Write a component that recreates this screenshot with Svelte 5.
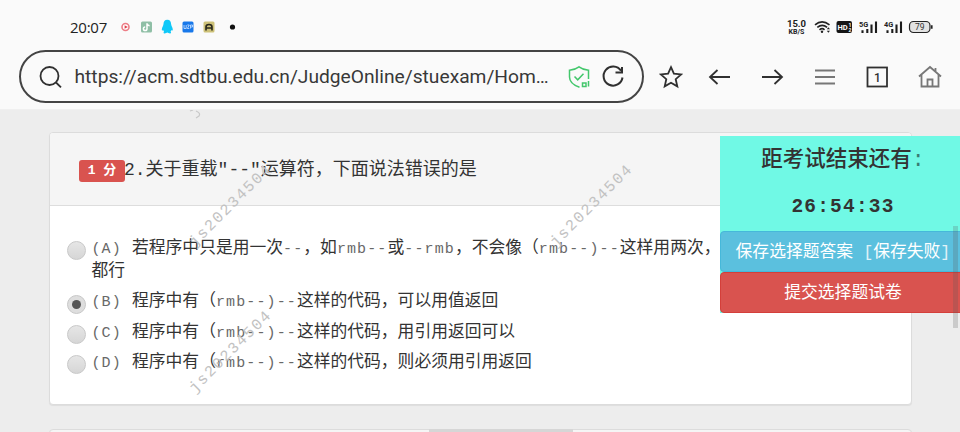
<script>
  const options = [
    { key: 'A', text: [['若程序中只是用一次', 0], ['--', 1], ['，如', 0], ['rmb--', 1], ['或', 0], ['--rmb', 1], ['，不会像（', 0], ['rmb--)--', 1], ['这样用两次，', 0]], rest: '都行' },
    { key: 'B', on: true, text: [['程序中有（', 0], ['rmb--)--', 1], ['这样的代码，可以用值返回', 0]] },
    { key: 'C', text: [['程序中有（', 0], ['rmb--)--', 1], ['这样的代码，用引用返回可以', 0]] },
    { key: 'D', text: [['程序中有（', 0], ['rmb--)--', 1], ['这样的代码，则必须用引用返回', 0]] }
  ];
  const marks = [[230, 205], [591, 205], [230, 351]];
</script>

<div class="screen">
  <header>
    <div class="status">
      <span class="clock">20:07</span>
      <svg class="apps" width="122" height="18" viewBox="0 0 122 18">
        <circle cx="10.5" cy="9" r="3.5" fill="#fff" stroke="#ed7d86" stroke-width="1.6" />
        <path d="M9.6 7.2 12.8 9 9.6 10.8z" fill="#e0404c" />
        <rect x="26" y="3.5" width="11" height="11" rx="1.5" fill="#8fbfa6" />
        <path d="M32 5.3v5.4a1.8 1.8 0 1 1-1.8-1.8M32 5.5q.5 2 2.6 2.3" fill="none" stroke="#fff" stroke-width="1.5" />
        <path d="M52.3 1.8c-2.7 0-3.8 2-3.8 4.3 0 1.6-1.7 3.6-1.7 5.6 0 1 .6 1.1 1.4.2.2.8.5 1.3.9 1.8-.8.6-.9 1.7.5 1.7 1.2 0 2.1-.3 2.7-.8.6.5 1.5.8 2.7.8 1.4 0 1.3-1.1.5-1.7.4-.5.7-1 .9-1.8.8.9 1.4.8 1.4-.2 0-2-1.7-4-1.7-5.6 0-2.3-1.1-4.3-3.8-4.3z" fill="#10c8f8" />
        <rect x="67.5" y="3.5" width="11" height="11" rx="1.5" fill="#1878ea" />
        <path d="M69 7v3.500h2.200V7M72.300 7h2l-2 3.500h2M75.500 10.500V7h2v2h-2" fill="none" stroke="#bfdcff" stroke-width=".9" />
        <rect x="88.500" y="3.500" width="11" height="11" rx="1.500" fill="#cdc178" />
        <path d="M91 12.500V9q0-2.500 3-2.500T97 9v3.500M91 10h6" fill="none" stroke="#28281c" stroke-width="1.600" />
        <circle cx="117.500" cy="9" r="2.600" fill="#111" />
      </svg>
      <div class="signals">
        <div class="speed"><b>15.0</b><b class="unit">KB/S</b></div>
        <svg width="126" height="18" viewBox="0 0 126 18">
          <g fill="none" stroke="#222" stroke-width="1.600">
            <path d="M1 6.800q7-6 14.500 0M3.300 9.300q5-4 9.800 0M5.500 11.800q2.700-2.200 5 0" />
          </g>
          <circle cx="8" cy="13.800" r="1.200" fill="#222" />
          <path d="M12.800 11.300 14.400 9.200 16 11.300zM12.800 12.700 14.400 14.800 16 12.700z" fill="#222" />
          <rect x="22.500" y="3" width="15.500" height="12" rx="2" fill="#151515" />
          <text x="23.500" y="12" font-size="7.500" fill="#fff">HD</text>
          <text x="34.500" y="8.500" font-size="5" fill="#fff">1</text>
          <text x="34.500" y="13.500" font-size="5" fill="#fff">2</text>
          <text x="45" y="8.800" font-size="7.300" fill="#222">5G</text>
          <path d="M48.500 12.200v2.800M53.300 11v4M57.500 6.500V15M62 3.500V15" stroke="#1c1c1c" stroke-width="2.100" />
          <text x="70" y="8.800" font-size="7.300" fill="#222">4G</text>
          <path d="M73.500 12.200v2.800M78.300 11v4M82.500 6.500V15M87 3.500V15" stroke="#1c1c1c" stroke-width="2.100" />
          <rect x="95.500" y="3.500" width="20.500" height="11" rx="4" fill="#e2e2e2" stroke="#222" stroke-width="1.200" />
          <path d="M117.800 7.300v3.500" stroke="#222" stroke-width="1.600" />
          <text x="101" y="12" font-size="8.500" fill="#333">79</text>
        </svg>
      </div>
    </div>

    <div class="toolbar">
      <div class="address">
        <svg class="search" width="24" height="24" viewBox="0 0 24 24" fill="none" stroke="#303030" stroke-width="1.800"><circle cx="10.500" cy="11" r="9" /><path d="m17 17.500 5 4.800" /></svg>
        <span class="url">https://acm.sdtbu.edu.cn/JudgeOnline/stuexam/Hom…</span>
        <svg class="shield" width="24" height="24" viewBox="0 0 24 24" fill="none" stroke="#43c76c" stroke-width="1.500"><path d="M12.500 22.200C6 20 2.500 16.500 2.500 12V5.200Q8 4.800 12 1.800q4 3 9.500 3.400V14M7.500 11.500l3.200 3.300 5.800-6" /><path d="M15.500 18h3.500v3.500h-3.500zM21.500 16v5.500" /></svg>
        <svg class="reload" width="24" height="24" viewBox="0 0 24 24" fill="none" stroke="#303030" stroke-width="2"><path d="M20 5.800A9.500 9.500 0 1 0 21.500 12.500M21 2V7.500H14.500" /></svg>
      </div>
      <nav>
        <svg width="24" height="24" viewBox="0 0 24 24" stroke="#303030"><path d="m12 2.200 2.900 6.500 7.200.7-5.400 4.800 1.600 7.200L12 17.700l-6.300 3.700 1.600-7.200-5.400-4.800 7.200-.7z" /></svg>
        <svg class="back" width="24" height="24" viewBox="0 0 24 24" stroke="#303030"><path d="M22 12H2M9.500 5 2 12l7.500 7" /></svg>
        <svg width="24" height="24" viewBox="0 0 24 24" stroke="#303030"><path d="M2 12h20M14.500 5 22 12l-7.500 7" /></svg>
        <svg width="24" height="24" viewBox="0 0 24 24" stroke="#777"><path d="M2 5.500h20M2 12h20M2 18.500h20" /></svg>
        <svg width="24" height="24" viewBox="0 0 24 24" stroke="#303030"><rect x="2.500" y="2.500" width="19.500" height="19" /><text x="9" y="16.500" font-size="12" font-weight="500" fill="#303030" stroke="none">1</text></svg>
        <svg width="24" height="24" viewBox="0 0 24 24" stroke="#777"><path d="M1 11.500 12 2l11 9.500M3.500 10v11.500h17V10M9.500 21.500v-7h5v7M17.500 3v4" /></svg>
      </nav>
    </div>
  </header>

  <main>
    <section class="card">
      <div class="title"><span class="badge">1 分</span><span class="question">2.关于重载"--"运算符，下面说法错误的是</span></div>
      <div class="options">
        {#each options as o}
          <div class="option">
            <span class="radio" class:on={o.on}></span>
            <div class="answer"><span class="latin">{`(${o.key}) `}</span>{#each o.text as [t, latin]}<span class:latin>{t}</span>{/each}{#if o.rest}<br />{o.rest}{/if}</div>
          </div>
        {/each}
      </div>
    </section>
    <section class="card next"></section>
  </main>

  <svg class="marks" width="960" height="322" viewBox="0 110 960 322">
    {#each marks as [x, y]}
      <text transform="translate({x} {y}) rotate(-45)" text-anchor="middle" y="5">js20234504</text>
    {/each}
    <path d="M190 111l3-1M196 111q5 2 3 5l-3 2" fill="none" stroke="#c8c8c8" stroke-width="1.200" />
  </svg>

  <aside>
    <div class="left">距考试结束还有<span>:</span></div>
    <div class="time">26:54:33</div>
    <button class="save">保存选择题答案 <i>[</i>保存失败<i>]</i></button>
    <button class="submit">提交选择题试卷</button>
  </aside>
  <div class="vbar"></div>
  <div class="hbar"></div>
</div>

<style>
  :global(body) { margin: 0; overflow: hidden; }
  .screen { position: relative; width: 960px; height: 432px; overflow: hidden; display: flex; flex-direction: column; background: #ededed; color: #333; font-family: "Liberation Mono", "Noto Sans CJK SC", monospace; }
  svg { display: block; flex: none; }
  header { height: 110px; flex: none; box-sizing: border-box; background: #fafafa; font-family: Roboto, sans-serif; border-bottom: 1px solid #f0f0f0; }
  .status { display: flex; align-items: center; height: 18px; padding: 18px 0 0 70px; }
  .clock { width: 45px; font: 15px "Open Sans", sans-serif; letter-spacing: -.25px; line-height: 18px; color: #222; white-space: nowrap; }
  .signals { display: flex; margin-left: auto; padding-right: 20px; gap: 8px; }
  .signals svg text { font-family: Roboto, sans-serif; font-weight: 700; }
  .signals svg text:last-child { font-weight: 400; }
  .speed { width: 19px; display: flex; flex-direction: column; align-items: center; padding-top: 1px; font-size: 9.500px; line-height: 9px; color: #222; }
  .unit { font-size: 7px; line-height: 8px; }
  .toolbar { display: flex; align-items: center; padding: 14px 18px 0 19px; }
  .address { width: 625px; height: 53px; box-sizing: border-box; border: 2px solid #444; border-radius: 27px; display: flex; align-items: center; padding-left: 18px; }
  .url { width: 475px; margin-left: 11.500px; font-size: 19.220px; white-space: nowrap; color: #383838; }
  .shield { margin-left: 17px; }
  .reload { margin-left: 10px; }
  nav { flex: 1; display: flex; gap: 28.500px; margin-left: 15px; }
  nav svg { fill: none; stroke-width: 1.800; }
  .back { margin-left: -4px; }
  main { display: flex; flex-direction: column; gap: 24px; padding: 22px 48px 0 49px; }
  .card { height: 273px; box-sizing: border-box; flex: none; background: #fff; border: 1px solid #dcdcdc; border-radius: 4px; box-shadow: 0 1px 1px #0001; }
  .title { height: 73px; box-sizing: border-box; display: flex; align-items: center; padding-left: 29px; background: #f5f5f5; border-bottom: 1px solid #ddd; border-radius: 3px 3px 0 0; font-size: 18px; white-space: nowrap; }
  .question { padding-bottom: 4px; margin-left: -1px; }
  .badge { width: 46px; height: 22px; border-radius: 3px; background: #d9534f; color: #fff; font: 700 13px/21px "Liberation Mono", "Noto Sans CJK SC", monospace; text-align: center; margin-top: 3px; }
  .options { display: flex; flex-direction: column; gap: 6.500px; padding: 30.500px 0 0 17px; }
  .option { display: flex; gap: 5.500px; font-size: 16.800px; line-height: 23.700px; white-space: pre; }
  .radio { width: 17px; height: 17px; border: 1px solid #c8c8c8; border-radius: 50%; background: linear-gradient(#e6e6e6, #d6d6d6); margin-top: 4.500px; flex: none; display: flex; align-items: center; justify-content: center; }
  .radio.on { background: #dedede; }
  .radio.on::after { content: ""; width: 9px; height: 9px; border-radius: 50%; background: #555; }
  .latin { color: #686868; font-size: 15px; letter-spacing: 1.120px; line-height: 1; }
  .next { background: #f5f5f5; }
  .marks { position: absolute; left: 0; top: 110px; pointer-events: none; }
  .marks text { font-family: "Liberation Mono", monospace; font-size: 15.500px; letter-spacing: 1.700px; fill: #c2c2c2; }
  aside { position: absolute; left: 720px; top: 136px; width: 246px; height: 177px; background: #70f9e5; display: flex; flex-direction: column; text-align: center; white-space: nowrap; }
  .left { height: 47px; line-height: 48px; font-size: 21.500px; font-weight: 500; }
  .left span { color: #387c73; }
  .time { height: 48px; line-height: 48px; font-size: 19.500px; letter-spacing: 1.200px; font-weight: 700; }
  button { height: 41px; flex: none; border: 1px solid; border-radius: 4px; color: #fff; font: 16.800px "Liberation Mono", "Noto Sans CJK SC", monospace; padding: 0 0 4px; white-space: nowrap; }
  .save { background: #5bc0de; border-color: #46b8da; }
  .submit { background: #d9534f; border-color: #d43f3a; }
  i { font-style: normal; opacity: .8; }
  .vbar { position: absolute; left: 953px; top: 226px; width: 5px; height: 102px; background: rgba(90, 90, 90, .23); }
  .hbar { position: absolute; left: 429px; top: 429px; width: 144px; height: 3px; background: #d6d6d6; }
</style>
